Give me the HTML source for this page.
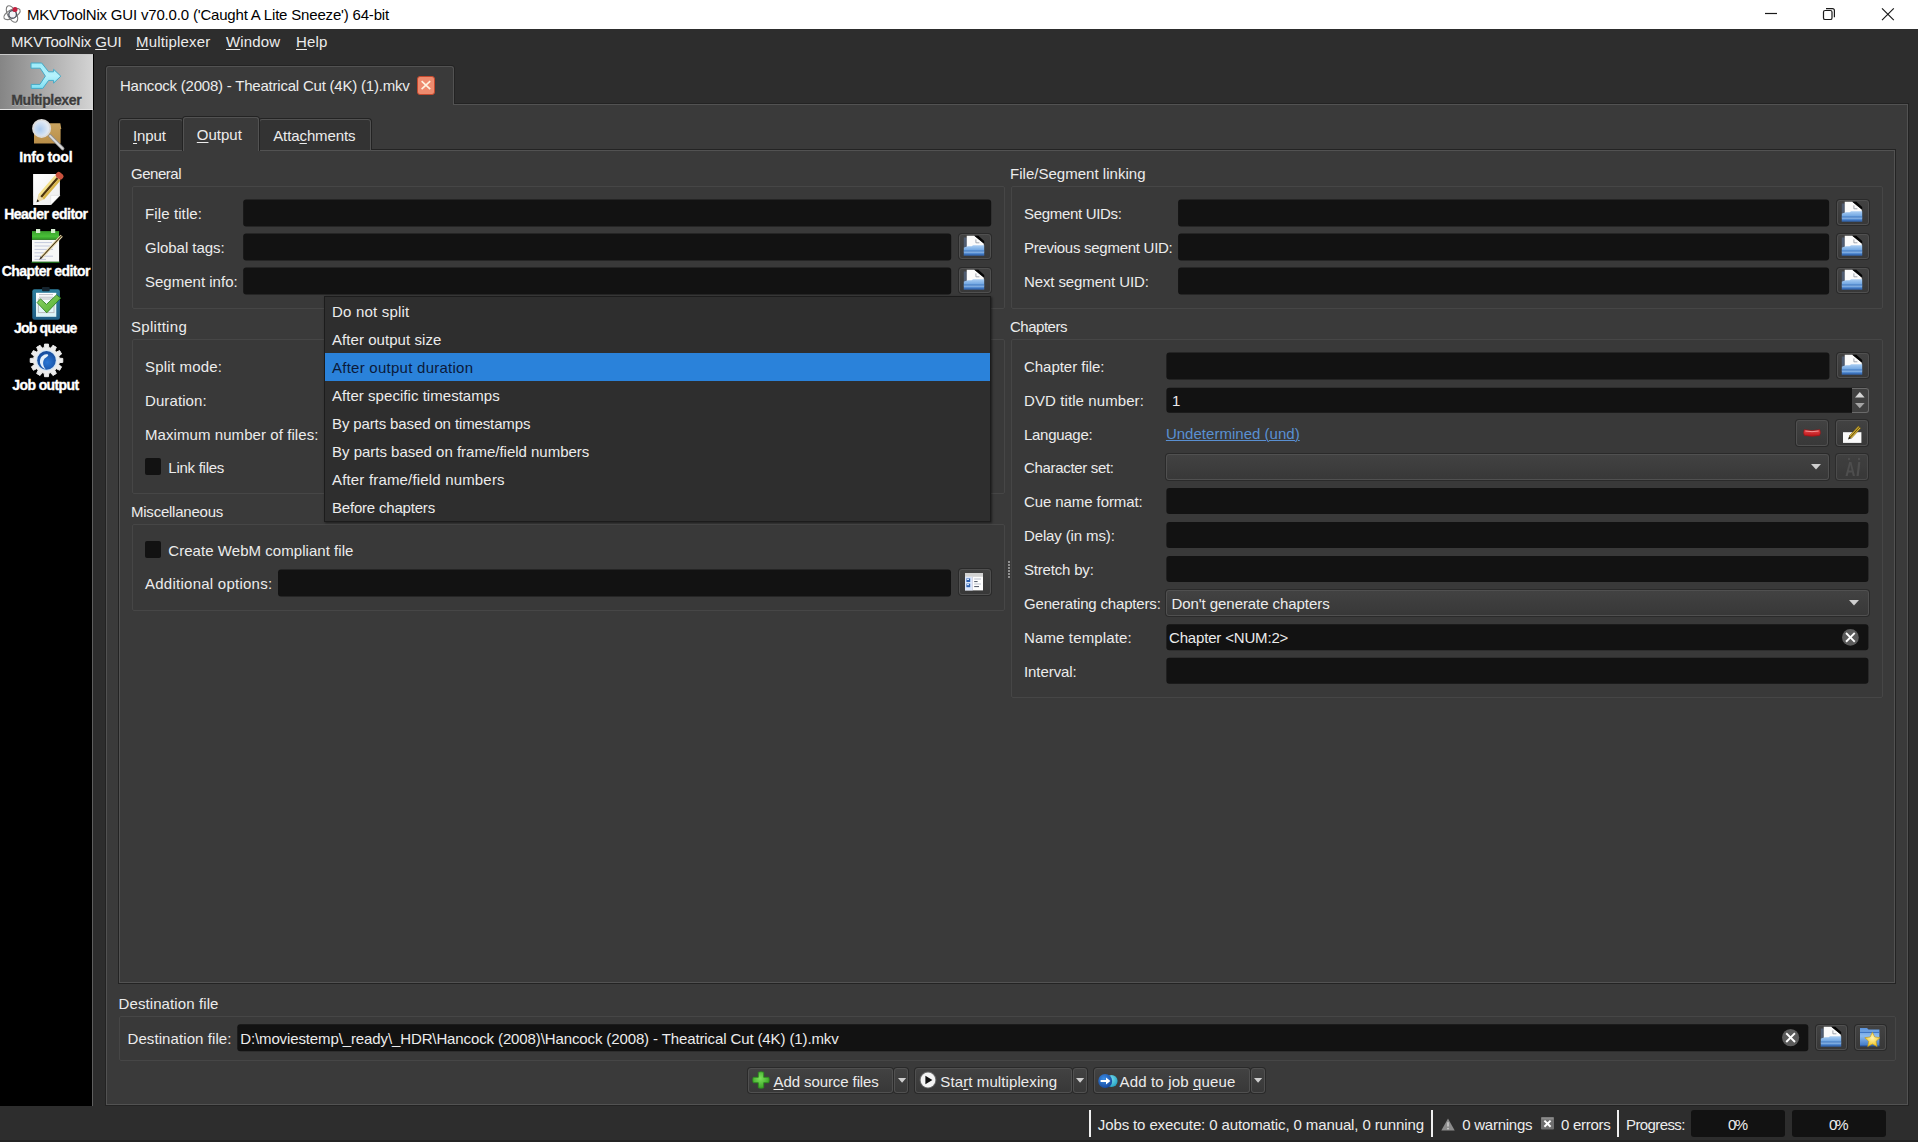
<!DOCTYPE html>
<html lang="en"><head><meta charset="utf-8"><title>MKVToolNix GUI</title>
<style>
html,body{margin:0;padding:0;}
body{width:1918px;height:1142px;overflow:hidden;background:#2d2d2d;font-family:'Liberation Sans', sans-serif;font-size:15px;position:relative;}
#root{position:absolute;left:0;top:0;width:1918px;height:1142px;overflow:hidden;}
#root div{position:absolute;box-sizing:border-box;}
#root svg{position:absolute;overflow:visible;}
.t{position:absolute;white-space:pre;}
.t u{text-decoration:underline;text-underline-offset:2px;text-decoration-thickness:1px;}
.in{background:#121212;border-radius:3px;}
.gb{border:1px solid #464646;border-radius:2px;background:#393939;}
.btn{border:1px solid #505050;border-radius:3px;background:linear-gradient(#424242,#383838);box-shadow:0 0 0 1px #2a2a2a;}
</style></head><body><div id="root">
<div style="left:0px;top:0px;width:1918px;height:29px;background:#ffffff;"></div>
<div style="left:0px;top:29px;width:1918px;height:25px;background:#2d2d2d;"></div>
<div style="left:0px;top:54px;width:93px;height:1052px;background:#000000;border-right:1px solid #5e5e5e;"></div>
<div style="left:0px;top:54px;width:93px;height:56px;background:linear-gradient(90deg,#858585,#d4d4d4);border-top:1px solid #c9c9c9;border-bottom:1px solid #e4e4e4;"></div>
<div style="left:93px;top:54px;width:1px;height:56px;background:#000000;"></div>
<svg style="left:16px;top:54px;" width="60" height="60" viewBox="16 54 60 60" preserveAspectRatio="none"><defs><linearGradient id="mx" x1="0" y1="0" x2="0" y2="1"><stop offset="0" stop-color="#9cecfa"/><stop offset=".5" stop-color="#b6f2fc"/><stop offset="1" stop-color="#7fe0f3"/></linearGradient></defs>
<path d="M31 63H41.7L48.6 71.8H53.6V69.3L60.8 76.2L53.6 83.1V80.4H48.6L42.8 88.4H31.2V84.4H39.9L45.4 76.1L40.2 68.2H31Z" fill="url(#mx)" stroke="#45a9c6" stroke-width="1" stroke-linejoin="round"/></svg>
<svg style="left:16px;top:110px;" width="60" height="60" viewBox="16 110 60 60" preserveAspectRatio="none"><defs><linearGradient id="bx" x1="0" y1="0" x2="0" y2="1"><stop offset="0" stop-color="#c9a460"/><stop offset="1" stop-color="#b98e49"/></linearGradient>
<radialGradient id="ln" cx=".4" cy=".55" r=".7"><stop offset="0" stop-color="#a9c9ee"/><stop offset=".65" stop-color="#dde7f3"/><stop offset="1" stop-color="#f4f4f4"/></radialGradient></defs>
<path d="M34 123.2H60.3L61.3 129H60.6V143.6H34Z" fill="url(#bx)"/>
<path d="M50 135.8L62.6 148.6" stroke="#8f8f8f" stroke-width="3.6" stroke-linecap="round"/>
<path d="M50 135.8L62.6 148.6" stroke="#dedede" stroke-width="1.8" stroke-linecap="round"/>
<circle cx="41.6" cy="128.4" r="8.6" fill="url(#ln)" stroke="#dcdcdc" stroke-width="1.8"/></svg>
<svg style="left:16px;top:167px;" width="60" height="60" viewBox="16 167 60 60" preserveAspectRatio="none"><defs><linearGradient id="pg" x1="0" y1="0" x2="1" y2="1"><stop offset="0" stop-color="#ffffff"/><stop offset="1" stop-color="#ececec"/></linearGradient></defs>
<path d="M33.1 174.1H59.9V195.4L50.7 204.9H33.1Z" fill="url(#pg)"/>
<path d="M50.7 204.9V195.4H59.9Z" fill="#fdfdfd" stroke="#d6d6d6" stroke-width=".5"/>
<g transform="translate(36.6 202.2) rotate(-49)">
<path d="M0 0L7 -3.8V3.8Z" fill="#ead9a8"/>
<path d="M0 0L2.6 -1.4V1.4Z" fill="#2a2418"/>
<rect x="7" y="-3.8" width="25" height="2.6" fill="#f3e08a"/>
<rect x="7" y="-1.2" width="25" height="2.4" fill="#4d3409"/>
<rect x="7" y="1.2" width="25" height="2.6" fill="#d9b548"/>
<rect x="32" y="-4" width="6" height="8" rx="2.4" fill="#c9513d"/>
</g></svg>
<svg style="left:16px;top:224px;" width="60" height="60" viewBox="16 224 60 60" preserveAspectRatio="none"><defs><linearGradient id="gh" x1="0" y1="0" x2="0" y2="1"><stop offset="0" stop-color="#3aa02c"/><stop offset=".6" stop-color="#48c038"/><stop offset="1" stop-color="#2f8f24"/></linearGradient></defs>
<rect x="32" y="239.6" width="27.1" height="22.4" fill="#f7f8f7"/>
<rect x="31.6" y="261.6" width="27.9" height="1.4" fill="#1f6a1c"/>
<path d="M34.5 242.6H52" stroke="#c3c9dc" stroke-width="1"/><path d="M34.5 246H50" stroke="#c3c9dc" stroke-width="1"/><path d="M34.5 249.4H53" stroke="#c3c9dc" stroke-width="1"/><path d="M34.5 252.8H48" stroke="#c3c9dc" stroke-width="1"/><path d="M34.5 256.2H53" stroke="#c3c9dc" stroke-width="1"/><path d="M34.5 259.4H46" stroke="#c3c9dc" stroke-width="1"/>
<rect x="32" y="231.1" width="27.1" height="8.7" fill="url(#gh)"/>
<rect x="36" y="229" width="4.2" height="4" fill="#d6efd0"/><rect x="51" y="229" width="4.2" height="4" fill="#d6efd0"/>
<g transform="translate(39.2 259.8) rotate(-46.96)">
<path d="M0 0L4 -1.3V1.3Z" fill="#3a3020"/>
<rect x="4" y="-1.5" width="29" height="3" fill="#e9dcb0"/>
<rect x="4" y="-.45" width="29" height=".9" fill="#3b2a0c"/>
</g></svg>
<svg style="left:16px;top:281px;" width="60" height="60" viewBox="16 281 60 60" preserveAspectRatio="none"><defs><linearGradient id="cb" x1="0" y1="0" x2="0" y2="1"><stop offset="0" stop-color="#2e7f9e"/><stop offset="1" stop-color="#1f5f86"/></linearGradient>
<linearGradient id="pp" x1="0" y1="0" x2="0" y2="1"><stop offset="0" stop-color="#ffffff"/><stop offset="1" stop-color="#d9f2f6"/></linearGradient>
<linearGradient id="ck" x1="0" y1="0" x2="1" y2="1"><stop offset="0" stop-color="#8fd46a"/><stop offset="1" stop-color="#4fae2c"/></linearGradient></defs>
<rect x="32.3" y="289.2" width="27.6" height="30.5" rx="2.2" fill="url(#cb)"/>
<rect x="36" y="292.8" width="20.3" height="24" fill="url(#pp)"/>
<rect x="42" y="287" width="7.7" height="4.2" rx="1" fill="#16242e"/>
<path d="M39 294.6H53M39 297.2H53" stroke="#b7b7c0" stroke-width=".9"/>
<rect x="38.4" y="299" width="15.6" height="13.6" fill="none" stroke="#b9bcc0" stroke-width="1"/>
<path d="M37.1 302.6L40.5 298.9L46.5 304.4L56.5 294.9L60.7 298.1L46.8 312.8Z" fill="url(#ck)" stroke="#2f7f1f" stroke-width=".9" stroke-linejoin="round"/></svg>
<svg style="left:16px;top:338px;" width="60" height="60" viewBox="16 338 60 60" preserveAspectRatio="none"><defs><radialGradient id="bl" cx=".55" cy=".6" r=".6"><stop offset="0" stop-color="#2b78d6"/><stop offset="1" stop-color="#154a9a"/></radialGradient></defs>
<path d="M59.31 358.16L62.78 358.43L62.78 362.37L59.31 362.64L58.71 364.87L61.59 366.83L59.61 370.25L56.47 368.74L54.84 370.37L56.35 373.51L52.93 375.49L50.97 372.61L48.74 373.21L48.47 376.68L44.53 376.68L44.26 373.21L42.03 372.61L40.07 375.49L36.65 373.51L38.16 370.37L36.53 368.74L33.39 370.25L31.41 366.83L34.29 364.87L33.69 362.64L30.22 362.37L30.22 358.43L33.69 358.16L34.29 355.93L31.41 353.97L33.39 350.55L36.53 352.06L38.16 350.43L36.65 347.29L40.07 345.31L42.03 348.19L44.26 347.59L44.53 344.12L48.47 344.12L48.74 347.59L50.97 348.19L52.93 345.31L56.35 347.29L54.84 350.43L56.47 352.06L59.61 350.55L61.59 353.97L58.71 355.93Z" fill="#ececec" stroke="#ececec" stroke-width="1" stroke-linejoin="round"/>
<circle cx="46.5" cy="360.4" r="10.6" fill="#d5e6f6"/>
<circle cx="46.5" cy="360.4" r="9.3" fill="url(#bl)"/>
<path d="M46.6 354.2C41 354.6 38.8 360 40.6 364.6C41.6 367 43.4 368.6 45.6 369.2C42.6 366 42.4 361.4 44.6 358.6C45.6 357.4 47.2 356.8 48.2 355.4C48.4 354.6 47.6 354.2 46.6 354.2Z" fill="#e4f0fb"/></svg>
<div style="left:0px;top:1106px;width:1918px;height:36px;background:#2d2d2d;"></div>
<div style="left:106px;top:104px;width:1802px;height:1001px;background:#3a3a3a;border:1px solid #525252;box-shadow:0 0 0 1px #232323;"></div>
<div style="left:105px;top:65px;width:350px;height:39px;border:1px solid #232323;border-bottom:none;border-radius:4px 4px 0 0;"></div>
<div style="left:106px;top:66px;width:348px;height:39px;background:#3a3a3a;border:1px solid #525252;border-bottom:none;border-radius:3px 3px 0 0;"></div>
<div style="left:119px;top:150px;width:1776px;height:833px;background:#3a3a3a;border:1px solid #525252;box-shadow:0 0 0 1px #232323;"></div>
<div style="left:118px;top:118px;width:66px;height:32px;border:1px solid #232323;border-bottom:none;border-radius:4px 4px 0 0;"></div>
<div style="left:119px;top:119px;width:64px;height:32px;background:#333333;border:1px solid #525252;border-radius:3px 3px 0 0;"></div>
<div style="left:258px;top:118px;width:114px;height:32px;border:1px solid #232323;border-bottom:none;border-radius:4px 4px 0 0;"></div>
<div style="left:259px;top:119px;width:112px;height:32px;background:#333333;border:1px solid #525252;border-radius:3px 3px 0 0;"></div>
<div style="left:182px;top:116px;width:78px;height:35px;background:#3a3a3a;border:1px solid #232323;border-bottom:none;border-radius:4px 4px 0 0;"></div>
<div style="left:183px;top:117px;width:76px;height:34px;background:#3a3a3a;border:1px solid #525252;border-bottom:none;border-radius:3px 3px 0 0;"></div>
<div class="gb" style="left:132px;top:186px;width:873px;height:123px;"></div>
<div class="in" style="left:243px;top:199px;width:747.6px;height:27px;transform:translate(0.2px,0.45px);"></div>
<div class="in" style="left:243px;top:233px;width:708.4px;height:27px;transform:translate(0.2px,0.45px);"></div>
<div class="in" style="left:243px;top:267px;width:708.4px;height:27px;transform:translate(0.2px,0.45px);"></div>
<div class="btn" style="left:959px;top:234px;width:31.5px;height:25.3px;"></div>
<div class="btn" style="left:959px;top:268px;width:31.5px;height:25.3px;"></div>
<div class="gb" style="left:132px;top:339px;width:873px;height:155px;"></div>
<div style="left:145px;top:458px;width:16.4px;height:16.6px;background:#121212;border-radius:2px;"></div>
<div class="gb" style="left:132px;top:524px;width:873px;height:87px;"></div>
<div style="left:145px;top:541px;width:16.4px;height:16.6px;background:#121212;border-radius:2px;"></div>
<div class="in" style="left:278px;top:569px;width:673.4px;height:26.8px;transform:translate(0px,0.5px);"></div>
<div class="btn" style="left:959px;top:569.4px;width:31.5px;height:25.6px;"></div>
<div class="gb" style="left:1011px;top:186px;width:872px;height:123px;"></div>
<div class="in" style="left:1178px;top:199px;width:651.4px;height:27px;transform:translate(0.1px,0.45px);"></div>
<div class="btn" style="left:1836.5px;top:200px;width:32px;height:25.3px;"></div>
<div class="in" style="left:1178px;top:233px;width:651.4px;height:27px;transform:translate(0.1px,0.45px);"></div>
<div class="btn" style="left:1836.5px;top:234px;width:32px;height:25.3px;"></div>
<div class="in" style="left:1178px;top:267px;width:651.4px;height:27px;transform:translate(0.1px,0.45px);"></div>
<div class="btn" style="left:1836.5px;top:268px;width:32px;height:25.3px;"></div>
<div class="gb" style="left:1011px;top:339px;width:872px;height:359px;"></div>
<div class="in" style="left:1166px;top:352px;width:663px;height:27px;transform:translate(0.4px,0.45px);"></div>
<div class="btn" style="left:1836.5px;top:353px;width:32px;height:25.3px;"></div>
<div class="in" style="left:1166px;top:387px;width:702px;height:24.6px;transform:translate(0.4px,0.7px);"></div>
<div class="btn" style="left:1796px;top:420.4px;width:32px;height:26px;"></div>
<div class="btn" style="left:1836.2px;top:420.4px;width:32px;height:26px;"></div>
<div class="btn" style="left:1166px;top:453.6px;width:663px;height:26px;"></div>
<div class="btn" style="left:1836.2px;top:453.6px;width:32px;height:26px;opacity:.8;"></div>
<div class="in" style="left:1166px;top:487px;width:702px;height:26px;transform:translate(0.4px,0.9px);"></div>
<div class="in" style="left:1166px;top:522px;width:702px;height:26px;transform:translate(0.4px,0px);"></div>
<div class="in" style="left:1166px;top:556px;width:702px;height:25.8px;transform:translate(0.4px,0px);"></div>
<div class="btn" style="left:1166px;top:589.6px;width:702.6px;height:26.2px;"></div>
<div class="in" style="left:1166px;top:624px;width:702px;height:25.7px;transform:translate(0.4px,0.2px);"></div>
<div class="in" style="left:1166px;top:657px;width:702px;height:26.4px;transform:translate(0.4px,0.8px);"></div>
<div style="left:324px;top:296px;width:667px;height:226px;background:#2e2e2e;border:1px solid #1c1c1c;box-shadow:1px 1px 2px rgba(0,0,0,.5);"></div>
<div style="left:325px;top:353px;width:665px;height:28px;background:#2a82da;"></div>
<div class="gb" style="left:119px;top:1016px;width:1777px;height:45px;"></div>
<div class="in" style="left:237px;top:1024px;width:1570.8px;height:27.4px;transform:translate(0.3px,0.2px);"></div>
<div class="btn" style="left:1816px;top:1025px;width:31px;height:25px;"></div>
<div class="btn" style="left:1854.5px;top:1025px;width:31.5px;height:25px;"></div>
<div class="btn" style="left:748px;top:1068px;width:145px;height:25px;"></div>
<div class="btn" style="left:894px;top:1068px;width:14px;height:25px;"></div>
<div class="btn" style="left:915px;top:1068px;width:157px;height:25px;"></div>
<div class="btn" style="left:1073px;top:1068px;width:14px;height:25px;"></div>
<div class="btn" style="left:1094px;top:1068px;width:156px;height:25px;"></div>
<div class="btn" style="left:1251px;top:1068px;width:14px;height:25px;"></div>
<div style="left:1089px;top:1110px;width:2px;height:27px;background:#f0f0f0;"></div>
<div style="left:1431px;top:1110px;width:2px;height:27px;background:#f0f0f0;"></div>
<div style="left:1617px;top:1110px;width:2px;height:27px;background:#f0f0f0;"></div>
<div style="left:1691px;top:1110px;width:94px;height:27px;background:#121212;border-radius:3px;"></div>
<div style="left:1792px;top:1110px;width:94px;height:27px;background:#121212;border-radius:3px;"></div>
<svg style="left:2px;top:4px;" width="20" height="20" viewBox="0 0 20 20" preserveAspectRatio="none"><g fill="none" stroke="#7c7c7c" stroke-width="1.1"><ellipse cx="10" cy="10" rx="9" ry="4.2" transform="rotate(-28 10 10)"/><ellipse cx="10" cy="10" rx="9" ry="4.4" transform="rotate(62 10 10)"/></g>
<circle cx="10.6" cy="10.4" r="3.8" fill="#f4f4f8" stroke="#4a505c" stroke-width="1.3"/>
<circle cx="13" cy="5.4" r="2.5" fill="#c21f3e"/></svg>
<svg style="left:1760px;top:0px;" width="150" height="29" viewBox="1760 0 150 29" preserveAspectRatio="none"><path d="M1765 13.5H1777" stroke="#1a1a1a" stroke-width="1.2"/>
<rect x="1823.5" y="10.5" width="8.5" height="9" rx="1.6" fill="none" stroke="#1a1a1a" stroke-width="1.2"/>
<path d="M1826 8.6H1832.4Q1834.4 8.6 1834.4 10.6V17.2" fill="none" stroke="#1a1a1a" stroke-width="1.2"/>
<path d="M1882 8.4L1893.8 20.2M1893.8 8.4L1882 20.2" stroke="#1a1a1a" stroke-width="1.2"/></svg>
<div style="left:417px;top:76px;width:18px;height:19px;background:#ee8b6e;border:1px solid #c4492e;border-radius:3px;"></div>
<svg style="left:417px;top:76px;" width="18" height="19" viewBox="417 76 18 19" preserveAspectRatio="none"><path d="M421.6 81.2L430.2 89.2M430.2 81.2L421.6 89.2" stroke="#fff3e0" stroke-width="1.6"/></svg>
<svg style="left:962.5px;top:233.8px;" width="22" height="22" viewBox="0 0 22 22" preserveAspectRatio="none"><defs><linearGradient id="g1" x1="0" y1="0" x2="0" y2="1"><stop offset="0" stop-color="#a9cdf2"/><stop offset=".5" stop-color="#6fa5e2"/><stop offset="1" stop-color="#3f78c4"/></linearGradient></defs>
<path d="M.8 3.5H3.8V13H.8z" fill="#52627a" opacity=".85"/>
<path d="M3.75 1.8H11.3L20.8 9.4V13.5H3.75z" fill="#fbfbfb"/>
<path d="M11.3 1.8H15.4L21.2 6.9V9.9L20.8 9.4z" fill="#050505"/>
<path d="M12.9 5.4V8.8H16.4" fill="none" stroke="#8d929c" stroke-width=".8"/>
<path d="M.8 13.4L5 12.3H8.6L10.2 11.3H21.2V21.5H.8z" fill="url(#g1)"/>
<path d="M.8 17.1H21.2" stroke="#3a6fb8" stroke-width="1"/>
<path d="M.8 18.1H21.2" stroke="#b5d3f3" stroke-width=".8" opacity=".8"/>
<path d="M.8 21H21.2" stroke="#2c5a9e" stroke-width=".9"/></svg>
<svg style="left:962.5px;top:267.8px;" width="22" height="22" viewBox="0 0 22 22" preserveAspectRatio="none"><defs><linearGradient id="g2" x1="0" y1="0" x2="0" y2="1"><stop offset="0" stop-color="#a9cdf2"/><stop offset=".5" stop-color="#6fa5e2"/><stop offset="1" stop-color="#3f78c4"/></linearGradient></defs>
<path d="M.8 3.5H3.8V13H.8z" fill="#52627a" opacity=".85"/>
<path d="M3.75 1.8H11.3L20.8 9.4V13.5H3.75z" fill="#fbfbfb"/>
<path d="M11.3 1.8H15.4L21.2 6.9V9.9L20.8 9.4z" fill="#050505"/>
<path d="M12.9 5.4V8.8H16.4" fill="none" stroke="#8d929c" stroke-width=".8"/>
<path d="M.8 13.4L5 12.3H8.6L10.2 11.3H21.2V21.5H.8z" fill="url(#g2)"/>
<path d="M.8 17.1H21.2" stroke="#3a6fb8" stroke-width="1"/>
<path d="M.8 18.1H21.2" stroke="#b5d3f3" stroke-width=".8" opacity=".8"/>
<path d="M.8 21H21.2" stroke="#2c5a9e" stroke-width=".9"/></svg>
<svg style="left:1840.7px;top:199.8px;" width="22" height="22" viewBox="0 0 22 22" preserveAspectRatio="none"><defs><linearGradient id="g3" x1="0" y1="0" x2="0" y2="1"><stop offset="0" stop-color="#a9cdf2"/><stop offset=".5" stop-color="#6fa5e2"/><stop offset="1" stop-color="#3f78c4"/></linearGradient></defs>
<path d="M.8 3.5H3.8V13H.8z" fill="#52627a" opacity=".85"/>
<path d="M3.75 1.8H11.3L20.8 9.4V13.5H3.75z" fill="#fbfbfb"/>
<path d="M11.3 1.8H15.4L21.2 6.9V9.9L20.8 9.4z" fill="#050505"/>
<path d="M12.9 5.4V8.8H16.4" fill="none" stroke="#8d929c" stroke-width=".8"/>
<path d="M.8 13.4L5 12.3H8.6L10.2 11.3H21.2V21.5H.8z" fill="url(#g3)"/>
<path d="M.8 17.1H21.2" stroke="#3a6fb8" stroke-width="1"/>
<path d="M.8 18.1H21.2" stroke="#b5d3f3" stroke-width=".8" opacity=".8"/>
<path d="M.8 21H21.2" stroke="#2c5a9e" stroke-width=".9"/></svg>
<svg style="left:1840.7px;top:233.8px;" width="22" height="22" viewBox="0 0 22 22" preserveAspectRatio="none"><defs><linearGradient id="g4" x1="0" y1="0" x2="0" y2="1"><stop offset="0" stop-color="#a9cdf2"/><stop offset=".5" stop-color="#6fa5e2"/><stop offset="1" stop-color="#3f78c4"/></linearGradient></defs>
<path d="M.8 3.5H3.8V13H.8z" fill="#52627a" opacity=".85"/>
<path d="M3.75 1.8H11.3L20.8 9.4V13.5H3.75z" fill="#fbfbfb"/>
<path d="M11.3 1.8H15.4L21.2 6.9V9.9L20.8 9.4z" fill="#050505"/>
<path d="M12.9 5.4V8.8H16.4" fill="none" stroke="#8d929c" stroke-width=".8"/>
<path d="M.8 13.4L5 12.3H8.6L10.2 11.3H21.2V21.5H.8z" fill="url(#g4)"/>
<path d="M.8 17.1H21.2" stroke="#3a6fb8" stroke-width="1"/>
<path d="M.8 18.1H21.2" stroke="#b5d3f3" stroke-width=".8" opacity=".8"/>
<path d="M.8 21H21.2" stroke="#2c5a9e" stroke-width=".9"/></svg>
<svg style="left:1840.7px;top:267.8px;" width="22" height="22" viewBox="0 0 22 22" preserveAspectRatio="none"><defs><linearGradient id="g5" x1="0" y1="0" x2="0" y2="1"><stop offset="0" stop-color="#a9cdf2"/><stop offset=".5" stop-color="#6fa5e2"/><stop offset="1" stop-color="#3f78c4"/></linearGradient></defs>
<path d="M.8 3.5H3.8V13H.8z" fill="#52627a" opacity=".85"/>
<path d="M3.75 1.8H11.3L20.8 9.4V13.5H3.75z" fill="#fbfbfb"/>
<path d="M11.3 1.8H15.4L21.2 6.9V9.9L20.8 9.4z" fill="#050505"/>
<path d="M12.9 5.4V8.8H16.4" fill="none" stroke="#8d929c" stroke-width=".8"/>
<path d="M.8 13.4L5 12.3H8.6L10.2 11.3H21.2V21.5H.8z" fill="url(#g5)"/>
<path d="M.8 17.1H21.2" stroke="#3a6fb8" stroke-width="1"/>
<path d="M.8 18.1H21.2" stroke="#b5d3f3" stroke-width=".8" opacity=".8"/>
<path d="M.8 21H21.2" stroke="#2c5a9e" stroke-width=".9"/></svg>
<svg style="left:1840.7px;top:352.8px;" width="22" height="22" viewBox="0 0 22 22" preserveAspectRatio="none"><defs><linearGradient id="g6" x1="0" y1="0" x2="0" y2="1"><stop offset="0" stop-color="#a9cdf2"/><stop offset=".5" stop-color="#6fa5e2"/><stop offset="1" stop-color="#3f78c4"/></linearGradient></defs>
<path d="M.8 3.5H3.8V13H.8z" fill="#52627a" opacity=".85"/>
<path d="M3.75 1.8H11.3L20.8 9.4V13.5H3.75z" fill="#fbfbfb"/>
<path d="M11.3 1.8H15.4L21.2 6.9V9.9L20.8 9.4z" fill="#050505"/>
<path d="M12.9 5.4V8.8H16.4" fill="none" stroke="#8d929c" stroke-width=".8"/>
<path d="M.8 13.4L5 12.3H8.6L10.2 11.3H21.2V21.5H.8z" fill="url(#g6)"/>
<path d="M.8 17.1H21.2" stroke="#3a6fb8" stroke-width="1"/>
<path d="M.8 18.1H21.2" stroke="#b5d3f3" stroke-width=".8" opacity=".8"/>
<path d="M.8 21H21.2" stroke="#2c5a9e" stroke-width=".9"/></svg>
<svg style="left:1820.2px;top:1024.8px;" width="22" height="22" viewBox="0 0 22 22" preserveAspectRatio="none"><defs><linearGradient id="g7" x1="0" y1="0" x2="0" y2="1"><stop offset="0" stop-color="#a9cdf2"/><stop offset=".5" stop-color="#6fa5e2"/><stop offset="1" stop-color="#3f78c4"/></linearGradient></defs>
<path d="M.8 3.5H3.8V13H.8z" fill="#52627a" opacity=".85"/>
<path d="M3.75 1.8H11.3L20.8 9.4V13.5H3.75z" fill="#fbfbfb"/>
<path d="M11.3 1.8H15.4L21.2 6.9V9.9L20.8 9.4z" fill="#050505"/>
<path d="M12.9 5.4V8.8H16.4" fill="none" stroke="#8d929c" stroke-width=".8"/>
<path d="M.8 13.4L5 12.3H8.6L10.2 11.3H21.2V21.5H.8z" fill="url(#g7)"/>
<path d="M.8 17.1H21.2" stroke="#3a6fb8" stroke-width="1"/>
<path d="M.8 18.1H21.2" stroke="#b5d3f3" stroke-width=".8" opacity=".8"/>
<path d="M.8 21H21.2" stroke="#2c5a9e" stroke-width=".9"/></svg>
<svg style="left:1858.9px;top:1026.2px;" width="22" height="22" viewBox="0 0 22 22" preserveAspectRatio="none"><defs><linearGradient id="sf" x1="0" y1="0" x2="0" y2="1"><stop offset="0" stop-color="#5b93dc"/><stop offset=".45" stop-color="#8dbbee"/><stop offset="1" stop-color="#3d76c4"/></linearGradient>
<radialGradient id="st" cx=".5" cy=".4" r=".6"><stop offset="0" stop-color="#fff4b0"/><stop offset="1" stop-color="#f1c21c"/></radialGradient></defs>
<path d="M1 2H8L9.5 3.6H20.4V20H1Z" fill="url(#sf)"/><path d="M1 6.4H20.4" stroke="#3a70bf" stroke-width="1"/><path d="M1 20H20.4" stroke="#244f94" stroke-width="1"/>
<path d="M13.4 6.2L15.7 11L21 11.7L17.1 15.3L18.1 20.6L13.4 18L8.7 20.6L9.7 15.3L5.8 11.7L11.1 11Z" fill="url(#st)" stroke="#c89a10" stroke-width=".6" stroke-linejoin="round"/></svg>
<svg style="left:965px;top:572.6px;" width="18" height="18" viewBox="0 0 18 18" preserveAspectRatio="none"><rect x="0" y="0" width="18" height="17.4" fill="#fdfdfd"/><rect x="0" y="0" width="18" height="3.8" fill="#d2d2d2"/>
<rect x="0" y="3.8" width="7.2" height="13.6" fill="#dbe6fb"/><rect x="7.2" y="3.8" width=".7" height="13.6" fill="#c9c9dd"/>
<rect x="1.4" y="5.4" width="3.8" height="3.6" fill="#2b5fae"/><rect x="1.8" y="5.8" width="2.2" height="1.2" fill="#cfe2fb"/>
<rect x="1.4" y="10.6" width="3.8" height="3.6" fill="#2b5fae"/><rect x="1.8" y="11" width="2.2" height="1.2" fill="#cfe2fb"/>
<path d="M9.2 6H16M9.2 11H16" stroke="#aab0c0" stroke-width=".8"/><path d="M9.2 8.6H12.6M9.2 13.6H14" stroke="#4a5260" stroke-width="1"/></svg>
<svg style="left:1803.2px;top:429px;" width="18" height="7.4" viewBox="0 0 18 8" preserveAspectRatio="none"><defs><linearGradient id="mn" x1="0" y1="0" x2="0" y2="1"><stop offset="0" stop-color="#e8484a"/><stop offset="1" stop-color="#b81418"/></linearGradient></defs>
<path d="M1.2 .8Q9 2.6 16.8 .8Q18 4 16.6 7Q9 8.6 1.4 7Q0 4 1.2 .8Z" fill="url(#mn)" stroke="#a31014" stroke-width=".7"/>
<path d="M2.4 2.2Q9 3.6 15.6 2.2" stroke="#f6a0a0" stroke-width=".9" fill="none"/></svg>
<svg style="left:1842px;top:425px;" width="22" height="22" viewBox="0 0 22 22" preserveAspectRatio="none"><rect x="1" y="7.2" width="18.4" height="10.7" fill="#fafafa"/>
<g transform="translate(6 14.6) rotate(-47.1)">
<path d="M0 0L3.4 -1.5V1.5Z" fill="#2c2614"/>
<rect x="3.4" y="-1.6" width="13.6" height="3.2" fill="#e7c43a"/>
<rect x="3.4" y="-.5" width="13.6" height="1" fill="#6a5210"/>
<rect x="3.4" y="-1.6" width="13.6" height="3.2" fill="none" stroke="#5a4510" stroke-width=".5"/>
</g></svg>
<svg style="left:1841.5px;top:456px;" width="22" height="22" viewBox="0 0 22 22" preserveAspectRatio="none"><g fill="#4e4e4e"><path d="M3.5 20L7.2 6H9.4L13 20H10.8L10 16.5H6.5L5.7 20ZM7 14.6H9.6L8.3 8.8Z"/><path d="M14.5 20L16.2 6H18.4L16.7 20Z"/><circle cx="7" cy="3" r="1.2"/><circle cx="17" cy="3" r="1.2"/></g></svg>
<svg style="left:1810.5px;top:464px;" width="10" height="5.4" viewBox="0 0 10 5.4" preserveAspectRatio="none"><path d="M0 0H10L5.0 5.4z" fill="#cfcfcf"/></svg>
<svg style="left:1849.3px;top:600.2px;" width="10" height="5.4" viewBox="0 0 10 5.4" preserveAspectRatio="none"><path d="M0 0H10L5.0 5.4z" fill="#cfcfcf"/></svg>
<svg style="left:1842.3999999999999px;top:628.6px;" width="16.8" height="16.8" viewBox="-8.4 -8.4 16.8 16.8" preserveAspectRatio="none"><circle r="8.4" fill="#5b5b5b"/><path d="M-3.7 -3.7L3.7 3.7M3.7 -3.7L-3.7 3.7" stroke="#ffffff" stroke-width="1.9" stroke-linecap="square"/></svg>
<svg style="left:1782.4px;top:1029.4px;" width="17.2" height="17.2" viewBox="-8.6 -8.6 17.2 17.2" preserveAspectRatio="none"><circle r="8.6" fill="#5b5b5b"/><path d="M-3.7 -3.7L3.7 3.7M3.7 -3.7L-3.7 3.7" stroke="#ffffff" stroke-width="1.9" stroke-linecap="square"/></svg>
<div style="left:1852px;top:388px;width:17px;height:25px;background:#404040;border:1px solid #6a6a6a;border-left:none;border-radius:0 3px 3px 0;"></div>
<svg style="left:1854.6px;top:392.4px;" width="9.6" height="5.6" viewBox="0 0 9.6 5.6" preserveAspectRatio="none"><path d="M0 5.6H9.6L4.8 0Z" fill="#d6d6d6"/></svg>
<svg style="left:1854.6px;top:402.8px;" width="9.6" height="5.2" viewBox="0 0 9.6 5.2" preserveAspectRatio="none"><path d="M0 0H9.6L4.8 5.2Z" fill="#a4a4a4"/></svg>
<svg style="left:752.3px;top:1071px;" width="18" height="18" viewBox="0 0 18 18" preserveAspectRatio="none"><defs><radialGradient id="pl" cx=".45" cy=".4" r=".7"><stop offset="0" stop-color="#7be05a"/><stop offset="1" stop-color="#2f9a1e"/></radialGradient></defs>
<path d="M6.3 1.2Q9 .2 11.7 1.2V6.3H16.8Q17.8 9 16.8 11.7H11.7V16.8Q9 17.8 6.3 16.8V11.7H1.2Q.2 9 1.2 6.3H6.3Z" fill="url(#pl)" stroke="#2a8a1c" stroke-width=".8"/></svg>
<svg style="left:918.9px;top:1071.1px;" width="18" height="18" viewBox="-9 -9 18 18" preserveAspectRatio="none"><circle r="8.4" fill="#6a6a6a"/><circle r="7.4" fill="#f4f4f4"/><path d="M-2.6 -4.2L4.4 0L-2.6 4.2Z" fill="#111"/></svg>
<svg style="left:1097.6px;top:1073px;" width="20" height="16" viewBox="0 0 20 16" preserveAspectRatio="none"><defs><radialGradient id="aq" cx=".4" cy=".35" r=".75"><stop offset="0" stop-color="#3b8ee6"/><stop offset="1" stop-color="#123f94"/></radialGradient>
<radialGradient id="aq2" cx=".4" cy=".35" r=".75"><stop offset="0" stop-color="#7fe4f2"/><stop offset="1" stop-color="#1c9cc0"/></radialGradient></defs>
<circle cx="13.6" cy="8" r="6" fill="url(#aq2)"/>
<circle cx="7.2" cy="8" r="7" fill="url(#aq)"/>
<path d="M2.6 7H8V4.6L12.4 8L8 11.4V9H2.6Z" fill="#ffffff"/></svg>
<svg style="left:897.6px;top:1078px;" width="8.2" height="4.8" viewBox="0 0 8.2 4.8" preserveAspectRatio="none"><path d="M0 0H8.2L4.1 4.8z" fill="#cfcfcf"/></svg>
<svg style="left:1076.4px;top:1078px;" width="8.2" height="4.8" viewBox="0 0 8.2 4.8" preserveAspectRatio="none"><path d="M0 0H8.2L4.1 4.8z" fill="#cfcfcf"/></svg>
<svg style="left:1254.3px;top:1078px;" width="8.2" height="4.8" viewBox="0 0 8.2 4.8" preserveAspectRatio="none"><path d="M0 0H8.2L4.1 4.8z" fill="#cfcfcf"/></svg>
<svg style="left:1441px;top:1117.8px;" width="14" height="13" viewBox="0 0 14 13" preserveAspectRatio="none"><path d="M7 .4L13.7 12.6H.3Z" fill="#8c8c8c"/><path d="M7 4.2V8.6" stroke="#cfcfcf" stroke-width="1.5"/><circle cx="7" cy="10.6" r=".9" fill="#cfcfcf"/></svg>
<svg style="left:1540.6px;top:1117.2px;" width="13" height="12.5" viewBox="0 0 13 12.5" preserveAspectRatio="none"><rect width="13" height="12.5" rx="1" fill="#6f6f6f"/><rect x=".5" y=".5" width="12" height="2" fill="#8a8a8a"/><path d="M3.4 3.6L9.6 9.8M9.6 3.6L3.4 9.8" stroke="#ffffff" stroke-width="2"/></svg>
<div style="left:1008px;top:561px;width:2px;height:2px;background:#a6a6a6;transform:scaleY(.8);"></div>
<div style="left:1008px;top:564px;width:2px;height:2px;background:#a6a6a6;transform:scaleY(.8);"></div>
<div style="left:1008px;top:567px;width:2px;height:2px;background:#a6a6a6;transform:scaleY(.8);"></div>
<div style="left:1008px;top:570px;width:2px;height:2px;background:#a6a6a6;transform:scaleY(.8);"></div>
<div style="left:1008px;top:573px;width:2px;height:2px;background:#a6a6a6;transform:scaleY(.8);"></div>
<div style="left:1008px;top:576px;width:2px;height:2px;background:#a6a6a6;transform:scaleY(.8);"></div>
<div style="left:0px;top:1140px;width:1918px;height:2px;background:#242424;"></div>
<span class="t" style="left:27.00px;top:4px;line-height:21px;color:#000000;letter-spacing:-0.181px;">MKVToolNix GUI v70.0.0 (&#x27;Caught A Lite Sneeze&#x27;) 64-bit</span>
<span class="t" style="left:11.00px;top:31px;line-height:21px;color:#ececec;letter-spacing:-0.152px;">MKVToolNix <u>G</u>UI</span>
<span class="t" style="left:136.00px;top:31px;line-height:21px;color:#ececec;letter-spacing:0.174px;"><u>M</u>ultiplexer</span>
<span class="t" style="left:226.00px;top:31px;line-height:21px;color:#ececec;letter-spacing:0.132px;"><u>W</u>indow</span>
<span class="t" style="left:296.00px;top:31px;line-height:21px;color:#ececec;letter-spacing:0.150px;"><u>H</u>elp</span>
<span class="t" style="left:11.20px;top:90px;line-height:20px;color:#3c3c3c;font-size:14px;font-weight:bold;letter-spacing:-0.341px;text-shadow:0 1px 0 rgba(255,255,255,.55);-webkit-text-stroke:.35px #3c3c3c;">Multiplexer</span>
<span class="t" style="left:19.30px;top:147px;line-height:20px;color:#ffffff;font-size:14px;font-weight:bold;letter-spacing:-0.247px;-webkit-text-stroke:.35px #ffffff;">Info tool</span>
<span class="t" style="left:4.20px;top:204px;line-height:20px;color:#ffffff;font-size:14px;font-weight:bold;letter-spacing:-0.538px;-webkit-text-stroke:.35px #ffffff;">Header editor</span>
<span class="t" style="left:1.80px;top:261px;line-height:20px;color:#ffffff;font-size:14px;font-weight:bold;letter-spacing:-0.545px;-webkit-text-stroke:.35px #ffffff;">Chapter editor</span>
<span class="t" style="left:14.00px;top:318px;line-height:20px;color:#ffffff;font-size:14px;font-weight:bold;letter-spacing:-0.833px;-webkit-text-stroke:.35px #ffffff;">Job queue</span>
<span class="t" style="left:12.30px;top:375px;line-height:20px;color:#ffffff;font-size:14px;font-weight:bold;letter-spacing:-0.605px;-webkit-text-stroke:.35px #ffffff;">Job output</span>
<span class="t" style="left:120.00px;top:75px;line-height:21px;color:#ececec;letter-spacing:-0.216px;">Hancock (2008) - Theatrical Cut (4K) (1).mkv</span>
<span class="t" style="left:133.00px;top:125px;line-height:21px;color:#ececec;letter-spacing:-0.132px;"><u>I</u>nput</span>
<span class="t" style="left:196.80px;top:124px;line-height:21px;color:#ececec;letter-spacing:0.003px;"><u>O</u>utput</span>
<span class="t" style="left:273.20px;top:125px;line-height:21px;color:#ececec;letter-spacing:-0.101px;">Atta<u>c</u>hments</span>
<span class="t" style="left:131.00px;top:163px;line-height:21px;color:#ececec;letter-spacing:-0.464px;">General</span>
<span class="t" style="left:145.00px;top:203px;line-height:21px;color:#ececec;letter-spacing:0.110px;">Fi<u>l</u>e title:</span>
<span class="t" style="left:145.00px;top:237px;line-height:21px;color:#ececec;letter-spacing:-0.027px;">Global tags:</span>
<span class="t" style="left:145.00px;top:271px;line-height:21px;color:#ececec;letter-spacing:0.008px;">Segment info:</span>
<span class="t" style="left:131.00px;top:316px;line-height:21px;color:#ececec;letter-spacing:0.296px;">Splitting</span>
<span class="t" style="left:145.00px;top:356px;line-height:21px;color:#ececec;letter-spacing:0.191px;">Split mode:</span>
<span class="t" style="left:145.00px;top:390px;line-height:21px;color:#ececec;letter-spacing:0.097px;">Duration:</span>
<span class="t" style="left:145.00px;top:424px;line-height:21px;color:#ececec;letter-spacing:0.075px;">Maximum number of files:</span>
<span class="t" style="left:168.30px;top:457px;line-height:21px;color:#ececec;letter-spacing:-0.255px;">Link files</span>
<span class="t" style="left:131.00px;top:501px;line-height:21px;color:#ececec;letter-spacing:-0.232px;">Miscellaneous</span>
<span class="t" style="left:168.30px;top:540px;line-height:21px;color:#ececec;letter-spacing:0.046px;">Create WebM compliant file</span>
<span class="t" style="left:145.00px;top:573px;line-height:21px;color:#ececec;letter-spacing:0.253px;">Additional options:</span>
<span class="t" style="left:1010.00px;top:163px;line-height:21px;color:#ececec;letter-spacing:0.024px;">File/Segment linking</span>
<span class="t" style="left:1024.00px;top:203px;line-height:21px;color:#ececec;letter-spacing:-0.314px;">Segment UIDs:</span>
<span class="t" style="left:1024.00px;top:237px;line-height:21px;color:#ececec;letter-spacing:-0.274px;">Previous segment UID:</span>
<span class="t" style="left:1024.00px;top:271px;line-height:21px;color:#ececec;letter-spacing:-0.116px;">Next segment UID:</span>
<span class="t" style="left:1010.00px;top:316px;line-height:21px;color:#ececec;letter-spacing:-0.487px;">Chapters</span>
<span class="t" style="left:1024.00px;top:356px;line-height:21px;color:#ececec;letter-spacing:-0.035px;">Chapter file:</span>
<span class="t" style="left:1024.00px;top:390px;line-height:21px;color:#ececec;letter-spacing:0.092px;">DVD title number:</span>
<span class="t" style="left:1172.00px;top:390px;line-height:21px;color:#ececec;">1</span>
<span class="t" style="left:1024.00px;top:424px;line-height:21px;color:#ececec;letter-spacing:-0.281px;">Language:</span>
<span class="t" style="left:1165.90px;top:423px;line-height:21px;color:#5a90d2;letter-spacing:0.022px;text-decoration:underline;text-underline-offset:1px;text-decoration-thickness:1px;">Undetermined (und)</span>
<span class="t" style="left:1024.00px;top:457px;line-height:21px;color:#ececec;letter-spacing:-0.328px;">Character set:</span>
<span class="t" style="left:1024.00px;top:491px;line-height:21px;color:#ececec;letter-spacing:-0.087px;">Cue name format:</span>
<span class="t" style="left:1024.00px;top:525px;line-height:21px;color:#ececec;letter-spacing:-0.128px;">Delay (in ms):</span>
<span class="t" style="left:1024.00px;top:559px;line-height:21px;color:#ececec;letter-spacing:-0.185px;">Stretch by:</span>
<span class="t" style="left:1024.00px;top:593px;line-height:21px;color:#ececec;letter-spacing:-0.170px;">Generating chapters:</span>
<span class="t" style="left:1171.50px;top:593px;line-height:21px;color:#ececec;letter-spacing:-0.067px;">Don&#x27;t generate chapters</span>
<span class="t" style="left:1024.00px;top:627px;line-height:21px;color:#ececec;letter-spacing:0.136px;">Name template:</span>
<span class="t" style="left:1169.00px;top:627px;line-height:21px;color:#ececec;letter-spacing:-0.170px;">Chapter &lt;NUM:2&gt;</span>
<span class="t" style="left:1024.00px;top:661px;line-height:21px;color:#ececec;letter-spacing:-0.076px;">Interval:</span>
<span class="t" style="left:332.00px;top:301px;line-height:21px;color:#ececec;letter-spacing:0.191px;">Do not split</span>
<span class="t" style="left:332.00px;top:329px;line-height:21px;color:#ececec;letter-spacing:0.056px;">After output size</span>
<span class="t" style="left:332.00px;top:357px;line-height:21px;color:#0a1a3a;letter-spacing:0.255px;">After output duration</span>
<span class="t" style="left:332.00px;top:385px;line-height:21px;color:#ececec;letter-spacing:0.040px;">After specific timestamps</span>
<span class="t" style="left:332.00px;top:413px;line-height:21px;color:#ececec;letter-spacing:-0.122px;">By parts based on timestamps</span>
<span class="t" style="left:332.00px;top:441px;line-height:21px;color:#ececec;letter-spacing:-0.008px;">By parts based on frame/field numbers</span>
<span class="t" style="left:332.00px;top:469px;line-height:21px;color:#ececec;letter-spacing:0.173px;">After frame/field numbers</span>
<span class="t" style="left:332.00px;top:497px;line-height:21px;color:#ececec;letter-spacing:-0.196px;">Before chapters</span>
<span class="t" style="left:118.50px;top:993px;line-height:21px;color:#ececec;letter-spacing:0.101px;">Destination file</span>
<span class="t" style="left:127.50px;top:1028px;line-height:21px;color:#ececec;letter-spacing:0.087px;">Destination file:</span>
<span class="t" style="left:240.20px;top:1028px;line-height:21px;color:#ececec;letter-spacing:-0.116px;">D:\moviestemp\_ready\_HDR\Hancock (2008)\Hancock (2008) - Theatrical Cut (4K) (1).mkv</span>
<span class="t" style="left:773.50px;top:1071px;line-height:21px;color:#ececec;letter-spacing:-0.091px;"><u>A</u>dd source files</span>
<span class="t" style="left:940.30px;top:1071px;line-height:21px;color:#ececec;letter-spacing:0.105px;">Sta<u>r</u>t multiplexing</span>
<span class="t" style="left:1119.50px;top:1071px;line-height:21px;color:#ececec;letter-spacing:0.165px;">Add to job <u>q</u>ueue</span>
<span class="t" style="left:1097.80px;top:1114px;line-height:21px;color:#ececec;letter-spacing:-0.117px;">Jobs to execute: 0 automatic, 0 manual, 0 running</span>
<span class="t" style="left:1462.30px;top:1114px;line-height:21px;color:#ececec;letter-spacing:-0.264px;">0 warnings</span>
<span class="t" style="left:1561.10px;top:1114px;line-height:21px;color:#ececec;letter-spacing:-0.303px;">0 errors</span>
<span class="t" style="left:1626.00px;top:1114px;line-height:21px;color:#ececec;letter-spacing:-0.594px;">Progress:</span>
<span class="t" style="left:1728.10px;top:1114px;line-height:21px;color:#ececec;letter-spacing:-1.741px;">0%</span>
<span class="t" style="left:1828.90px;top:1114px;line-height:21px;color:#ececec;letter-spacing:-2.041px;">0%</span>
</div></body></html>
